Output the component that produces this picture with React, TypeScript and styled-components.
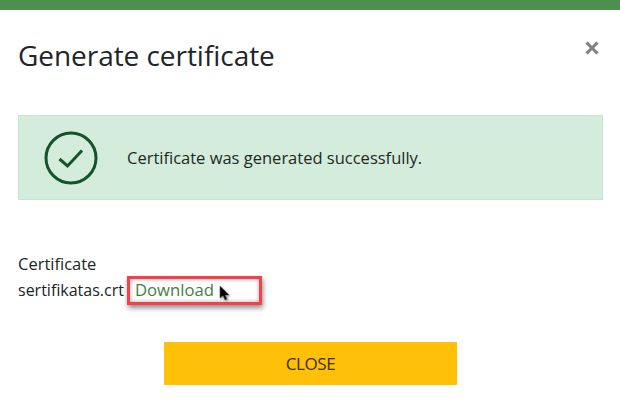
import React from "react";
import styled, { createGlobalStyle } from "styled-components";

const Global = createGlobalStyle`
  html, body { margin: 0; padding: 0; background: #fff; }
  body { font-family: "Open Sans", "Noto Sans", "Liberation Sans", sans-serif; color: #212529; overflow: hidden; }
`;

const Modal = styled.div`
  width: 620px;
  height: 405px;
  display: flex;
  flex-direction: column;
  border-top: 10px solid #4e8f4f;
  box-sizing: border-box;
  padding: 0 17px 0 18px;
`;

const Header = styled.header`
  display: flex;
  justify-content: space-between;
  height: 105px;
  align-items: flex-start;
`;

const Title = styled.h1`
  margin: 25px 0 0;
  font-size: 28px;
  line-height: 40px;
  font-weight: 400;
  letter-spacing: -0.05px;
`;

const CloseX = styled.button`
  border: 0;
  background: none;
  padding: 0;
  margin: 30px 3px 0 0;
  width: 16px;
  height: 16px;
  display: flex;
  color: #808080;
`;

const Alert = styled.div`
  height: 85px;
  box-sizing: border-box;
  background: #d4ecdc;
  border: 1px solid #c6e5d0;
  display: flex;
  align-items: center;
  padding-left: 25px;
  gap: 29px;
  font-size: 16.5px;
  color: #1c2a22;
`;

const Info = styled.div`
  margin-top: 51px;
  font-size: 16.5px;
  line-height: 26px;
`;

const FileRow = styled.div`
  display: flex;
  gap: 11px;
  position: relative;
`;

const FileName = styled.span`
  font-size: 16px;
`;

const DownloadLink = styled.a`
  color: #3f7f3f;
  font-size: 16.7px;
`;

const Highlight = styled.div`
  position: absolute;
  left: 109px;
  top: -1px;
  width: 135px;
  height: 29px;
  box-sizing: border-box;
  border: 3px solid #f4404a;
  box-shadow: 1px 3px 5px rgba(0, 0, 0, 0.45), inset 0 0 4px rgba(0, 0, 0, 0.35);
`;

const Pointer = styled.svg`
  position: absolute;
  left: 201px;
  top: 8px;
  filter: drop-shadow(1px 1px 1px rgba(0, 0, 0, 0.45));
`;

const Footer = styled.div`
  display: flex;
  justify-content: center;
  margin-top: 39px;
`;

const CloseButton = styled.button`
  width: 293px;
  height: 43px;
  border: 0;
  background: #ffc107;
  color: #3a2f0a;
  font-family: inherit;
  font-size: 17px;
  letter-spacing: -0.4px;
`;

export default function App() {
  return (
    <>
      <Global />
      <Modal>
        <Header>
          <Title>Generate certificate</Title>
          <CloseX aria-label="Close">
            <svg width="16" height="16" viewBox="0 0 16 16">
              <path d="M2.5 2.5 L13.5 13.5 M13.5 2.5 L2.5 13.5" stroke="currentColor" strokeWidth="3" />
            </svg>
          </CloseX>
        </Header>
        <Alert>
          <svg width="54" height="54" viewBox="0 0 54 54">
            <circle cx="27" cy="27" r="25" fill="none" stroke="#14532d" strokeWidth="3" />
            <path d="M15.5 28 L23.5 35 L38 19.5" fill="none" stroke="#14532d" strokeWidth="3" />
          </svg>
          <span>Certificate was generated successfully.</span>
        </Alert>
        <Info>
          <div>Certificate</div>
          <FileRow>
            <FileName>sertifikatas.crt</FileName>
            <DownloadLink>Download</DownloadLink>
            <Highlight />
            <Pointer width="12" height="16" viewBox="0 0 12 16">
              <path d="M1 1 L1 13 L4 10.5 L6 15 L8 14 L6 10 L10 10 Z" fill="#000" stroke="#555" strokeWidth="0.5" />
            </Pointer>
          </FileRow>
        </Info>
        <Footer>
          <CloseButton>CLOSE</CloseButton>
        </Footer>
      </Modal>
    </>
  );
}
